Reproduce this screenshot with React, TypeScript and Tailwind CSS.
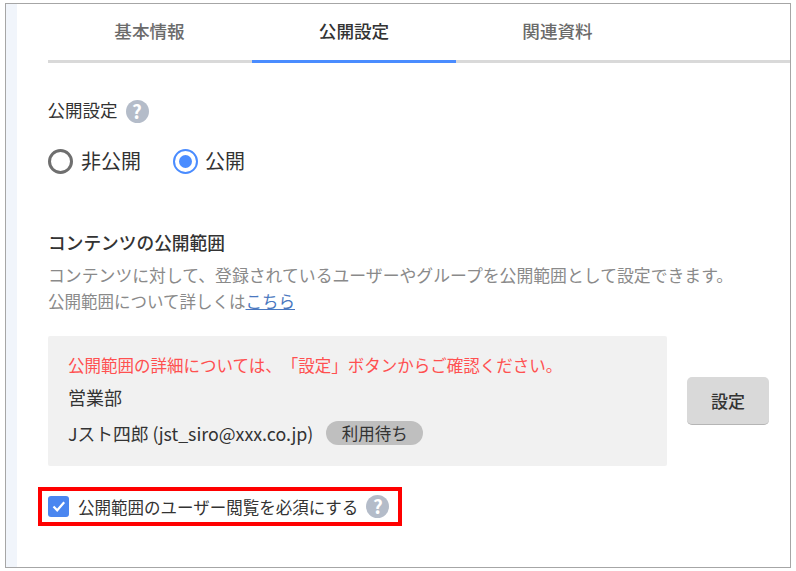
function Help({ size }: { size: string }) {
  return (
    <span className={`${size} inline-flex items-center justify-center rounded-full bg-[#b4bcc9] text-white font-bold shrink-0`}>?</span>
  );
}

export default function App() {
  return (
    <div
      className="w-[796px] h-[571px] bg-white pl-[5px] pr-[5px] pt-[3px] pb-[3px] text-[#333333] overflow-hidden [text-spacing-trim:space-all]"
      style={{ fontFamily: '"Noto Sans CJK JP", "Noto Sans", sans-serif' }}
    >
      <div className="w-full h-full border border-[#a6a6a6] flex">
        <div className="w-[11px] bg-[#f1f5fb] shrink-0" />
        <div className="flex-1 pl-[31px] flex flex-col min-w-0">
          <div className="flex items-start h-[57px] border-b-[3px] border-[#d9d9d9] box-content -mt-[1px]">
            <div className="w-[203px] mr-[1px] h-[57px] flex items-center justify-center text-[17.6px] font-medium text-[#6b6b6b]">基本情報</div>
            <div className="w-[204px] h-[60px] flex items-center justify-center text-[17.6px] font-medium text-[#333333] border-b-[3px] border-[#4a8cff]">公開設定</div>
            <div className="w-[203px] mr-[1px] h-[57px] flex items-center justify-center text-[17.6px] font-medium text-[#6b6b6b]">関連資料</div>
          </div>

          <div className="flex items-center gap-[8px] mt-[33px] h-[30px]">
            <span className="text-[17.5px] leading-[28px] -ml-[0.5px] pb-[2px]">公開設定</span>
            <Help size="w-[23px] h-[23px] text-[19px]" />
          </div>

          <div className="flex items-center mt-[20px] h-[30px]">
            <span className="w-[25px] h-[25px] rounded-full border-[3px] border-[#6f6f6f] shrink-0" />
            <span className="ml-[8px] text-[20px] leading-[30px]">非公開</span>
            <span className="ml-[32px] w-[25px] h-[25px] rounded-full border-[2.5px] border-[#4a8cff] flex items-center justify-center shrink-0">
              <span className="w-[13px] h-[13px] rounded-full bg-[#4a8cff]" />
            </span>
            <span className="ml-[7px] text-[20px] leading-[30px]">公開</span>
          </div>

          <div className="mt-[51px] text-[17.7px] leading-[30px] font-medium">コンテンツの公開範囲</div>
          <div className="mt-[4px] text-[16.85px] leading-[27px] text-[#8a8a8a]">
            <div>コンテンツに対して、登録されているユーザーやグループを公開範囲として設定できます。</div>
            <div className="text-[16.5px]">
              公開範囲について詳しくは<span className="text-[#4a78c0] underline">こちら</span>
            </div>
          </div>

          <div className="flex items-center mt-[21px]">
            <div className="w-[619px] h-[130px] bg-[#f1f1f1] rounded-[2px] pl-[20px] pt-[14px] flex flex-col shrink-0">
              <div className="text-[16.5px] leading-[30px] text-[#ff5050]">公開範囲の詳細については、「設定」ボタンからご確認ください。</div>
              <div className="text-[18px] leading-[30px] mt-[2px]">営業部</div>
              <div className="flex items-center mt-[6px] h-[30px]">
                <span className="text-[17.8px] leading-[30px]">Jスト四郎 (jst_siro@xxx.co.jp)</span>
                <span className="ml-[13px] w-[97px] h-[24px] rounded-full bg-[#bfbfbf] flex items-center justify-center text-[16.5px]">利用待ち</span>
              </div>
            </div>
            <button className="ml-[20px] w-[82px] h-[48px] rounded-[5px] bg-[#d9d9d9] border-b border-[#b5b5b5] text-[17px] font-medium text-[#333333]">設定</button>
          </div>

          <div className="-ml-[10px] mt-[21px] w-[364px] h-[39px] border-[4px] border-[#ff0000] flex items-center pl-[6px]">
            <span className="w-[21px] h-[21px] rounded-[3px] bg-[#4a86f0] flex items-center justify-center shrink-0">
              <svg viewBox="0 0 21 21" className="w-[21px] h-[21px]" fill="none" stroke="white" strokeWidth="2.2">
                <path d="M5.5 10.5l3.7 3.8 7-8" />
              </svg>
            </span>
            <span className="ml-[9px] text-[16.5px] leading-[30px] whitespace-nowrap">公開範囲のユーザー閲覧を必須にする</span>
            <span className="ml-[8px] inline-flex">
              <Help size="w-[23px] h-[23px] text-[19px]" />
            </span>
          </div>
        </div>
      </div>
    </div>
  );
}
